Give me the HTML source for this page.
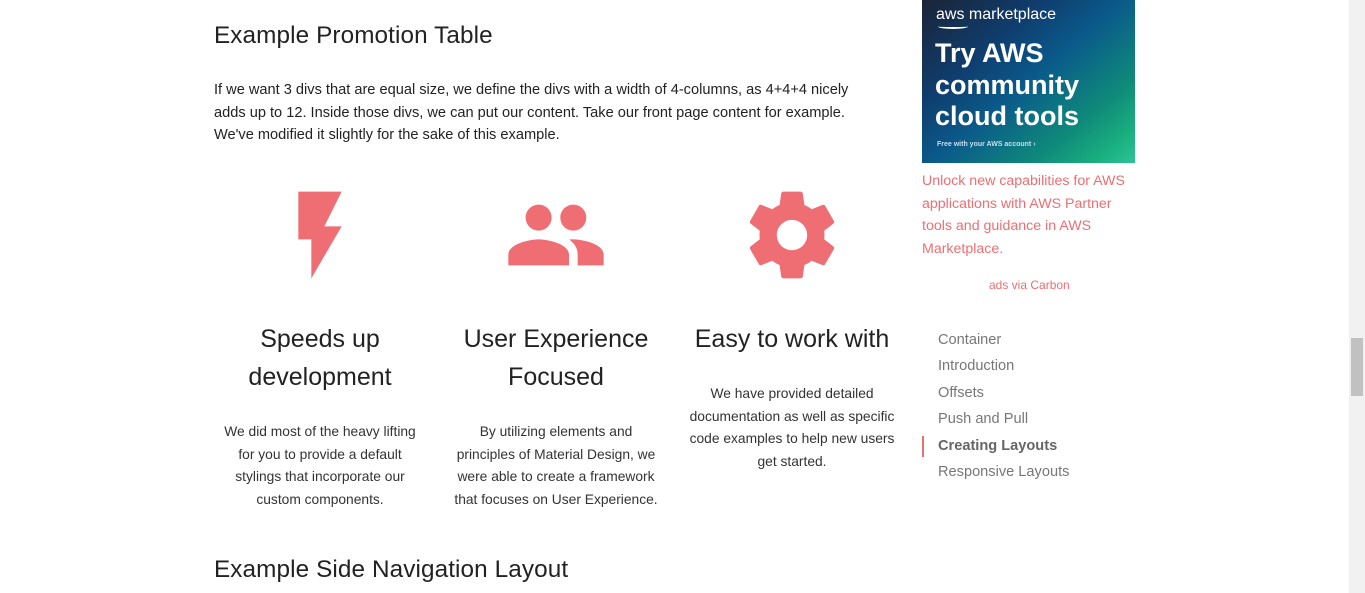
<!DOCTYPE html>
<html><head><meta charset="utf-8"><style>
*{box-sizing:border-box;margin:0;padding:0}
body{width:1365px;height:593px;overflow:hidden;background:#fff;font-family:"Liberation Sans",sans-serif;color:rgba(0,0,0,.87);position:relative}
.h{position:absolute;left:214px;font-size:24.3px;font-weight:normal;color:#222;letter-spacing:0.1px}
.p{position:absolute;left:214px;top:79px;width:660px;font-size:14.6px;line-height:22.7px;color:#222}
.col{position:absolute;width:236px;text-align:center}
.col svg{display:block;margin:0 auto}
.col h4{font-size:25px;font-weight:normal;line-height:38px;color:#222;margin-top:33px}
.col p{font-size:13.8px;line-height:22.7px;color:#333;white-space:nowrap;margin-top:25px}
.ad{position:absolute;left:922px;top:0;width:213px;height:163px;background:linear-gradient(140deg,#1b2436 0%,#0f3d6e 30%,#0a5a8a 50%,#0f8a7a 75%,#1ab07e 90%,#2ec29a 100%);color:#fff}
.side{position:absolute;left:922px;font-size:14.2px;color:#ee6e73}
.nav{position:absolute;left:938px;font-size:14.6px;color:#777}
.sb{position:absolute;right:0;top:0;width:16px;height:593px;background:#f1f1f1}
.th{position:absolute;right:2px;top:338px;width:12px;height:58px;background:#c1c1c1}
</style></head><body>
<div class="h" style="top:22px">Example Promotion Table</div>
<div class="p">If we want 3 divs that are equal size, we define the divs with a width of 4-columns, as 4+4+4 nicely adds up to 12. Inside those divs, we can put our content. Take our front page content for example. We've modified it slightly for the sake of this example.</div>

<div class="col" style="left:202px;top:183px">
<svg width="104" height="104" viewBox="0 0 24 24"><path fill="#ee6e73" d="M7 2v11h3v9l7-12h-4l4-8z"/></svg>
<h4>Speeds up development</h4>
<p>We did most of the heavy lifting<br>for you to provide a default<br>stylings that incorporate our<br>custom components.</p>
</div>
<div class="col" style="left:438px;top:183px">
<svg width="104" height="104" viewBox="0 0 24 24"><path fill="#ee6e73" d="M16 11c1.66 0 2.99-1.34 2.99-3S17.660 5 16 5c-1.66 0-3 1.34-3 3s1.34 3 3 3zm-8 0c1.66 0 2.99-1.34 2.99-3S9.66 5 8 5C6.34 5 5 6.34 5 8s1.34 3 3 3zm0 2c-2.33 0-7 1.17-7 3.5V19h14v-2.5c0-2.33-4.67-3.5-7-3.5zm8 0c-.29 0-.62.02-.97.05 1.16.84 1.97 1.97 1.97 3.45V19h6v-2.5c0-2.33-4.67-3.5-7-3.5z"/></svg>
<h4>User Experience Focused</h4>
<p>By utilizing elements and<br>principles of Material Design, we<br>were able to create a framework<br>that focuses on User Experience.</p>
</div>
<div class="col" style="left:674px;top:183px">
<svg width="104" height="104" viewBox="0 0 24 24"><path fill="#ee6e73" d="M19.43 12.98c.04-.32.07-.64.07-.98s-.03-.66-.07-.98l2.11-1.65c.19-.15.24-.42.12-.64l-2-3.46c-.12-.22-.39-.3-.61-.22l-2.49 1c-.52-.4-1.08-.73-1.69-.98l-.38-2.65C14.46 2.18 14.25 2 14 2h-4c-.25 0-.46.18-.49.42l-.38 2.65c-.61.25-1.17.59-1.69.98l-2.49-1c-.23-.09-.49 0-.61.22l-2 3.46c-.13.22-.07.49.12.64l2.11 1.65c-.04.32-.07.65-.07.98s.03.66.07.98l-2.11 1.65c-.19.15-.24.42-.12.64l2 3.46c.12.22.39.3.61.22l2.49-1c.52.4 1.08.73 1.69.98l.38 2.65c.03.24.24.42.49.42h4c.25 0 .46-.18.49-.42l.38-2.65c.61-.25 1.17-.59 1.69-.98l2.49 1c.23.09.49 0 .61-.22l2-3.46c.12-.22.07-.49-.12-.64l-2.11-1.65zM12 15.5c-1.93 0-3.5-1.57-3.5-3.5s1.57-3.5 3.5-3.5 3.5 1.57 3.5 3.5-1.57 3.5-3.5 3.5z"/></svg>
<h4>Easy to work with</h4>
<p>We have provided detailed<br>documentation as well as specific<br>code examples to help new users<br>get started.</p>
</div>

<div class="h" style="top:556px">Example Side Navigation Layout</div>

<div class="ad">
<div style="position:absolute;left:14px;top:6px;font-size:16px">aws marketplace</div>
<div style="position:absolute;left:16px;top:24px;width:30px;height:5px;border-bottom:2px solid #fff;border-radius:0 0 50% 50%"></div>
<div style="position:absolute;left:13px;top:38px;font-size:27px;font-weight:bold;line-height:31.5px">Try AWS<br>community<br>cloud tools</div>
<div style="position:absolute;left:15px;top:141px;font-size:7px;font-weight:bold;color:#cde">Free with your AWS account ›</div>
</div>
<div class="side" style="top:170px;line-height:22.6px;width:215px">Unlock new capabilities for AWS applications with AWS Partner tools and guidance in AWS Marketplace.</div>
<div class="side" style="top:278px;left:989px;font-size:12px">ads via Carbon</div>

<div class="nav" style="top:332px">Container</div>
<div class="nav" style="top:358px">Introduction</div>
<div class="nav" style="top:385px">Offsets</div>
<div class="nav" style="top:411px">Push and Pull</div>
<div style="position:absolute;left:922px;top:436px;width:2px;height:21px;background:#ee6e73"></div>
<div class="nav" style="top:438px;font-weight:bold;color:#666">Creating Layouts</div>
<div class="nav" style="top:464px">Responsive Layouts</div>

<div class="sb"><div class="th"></div></div>
</body></html>
